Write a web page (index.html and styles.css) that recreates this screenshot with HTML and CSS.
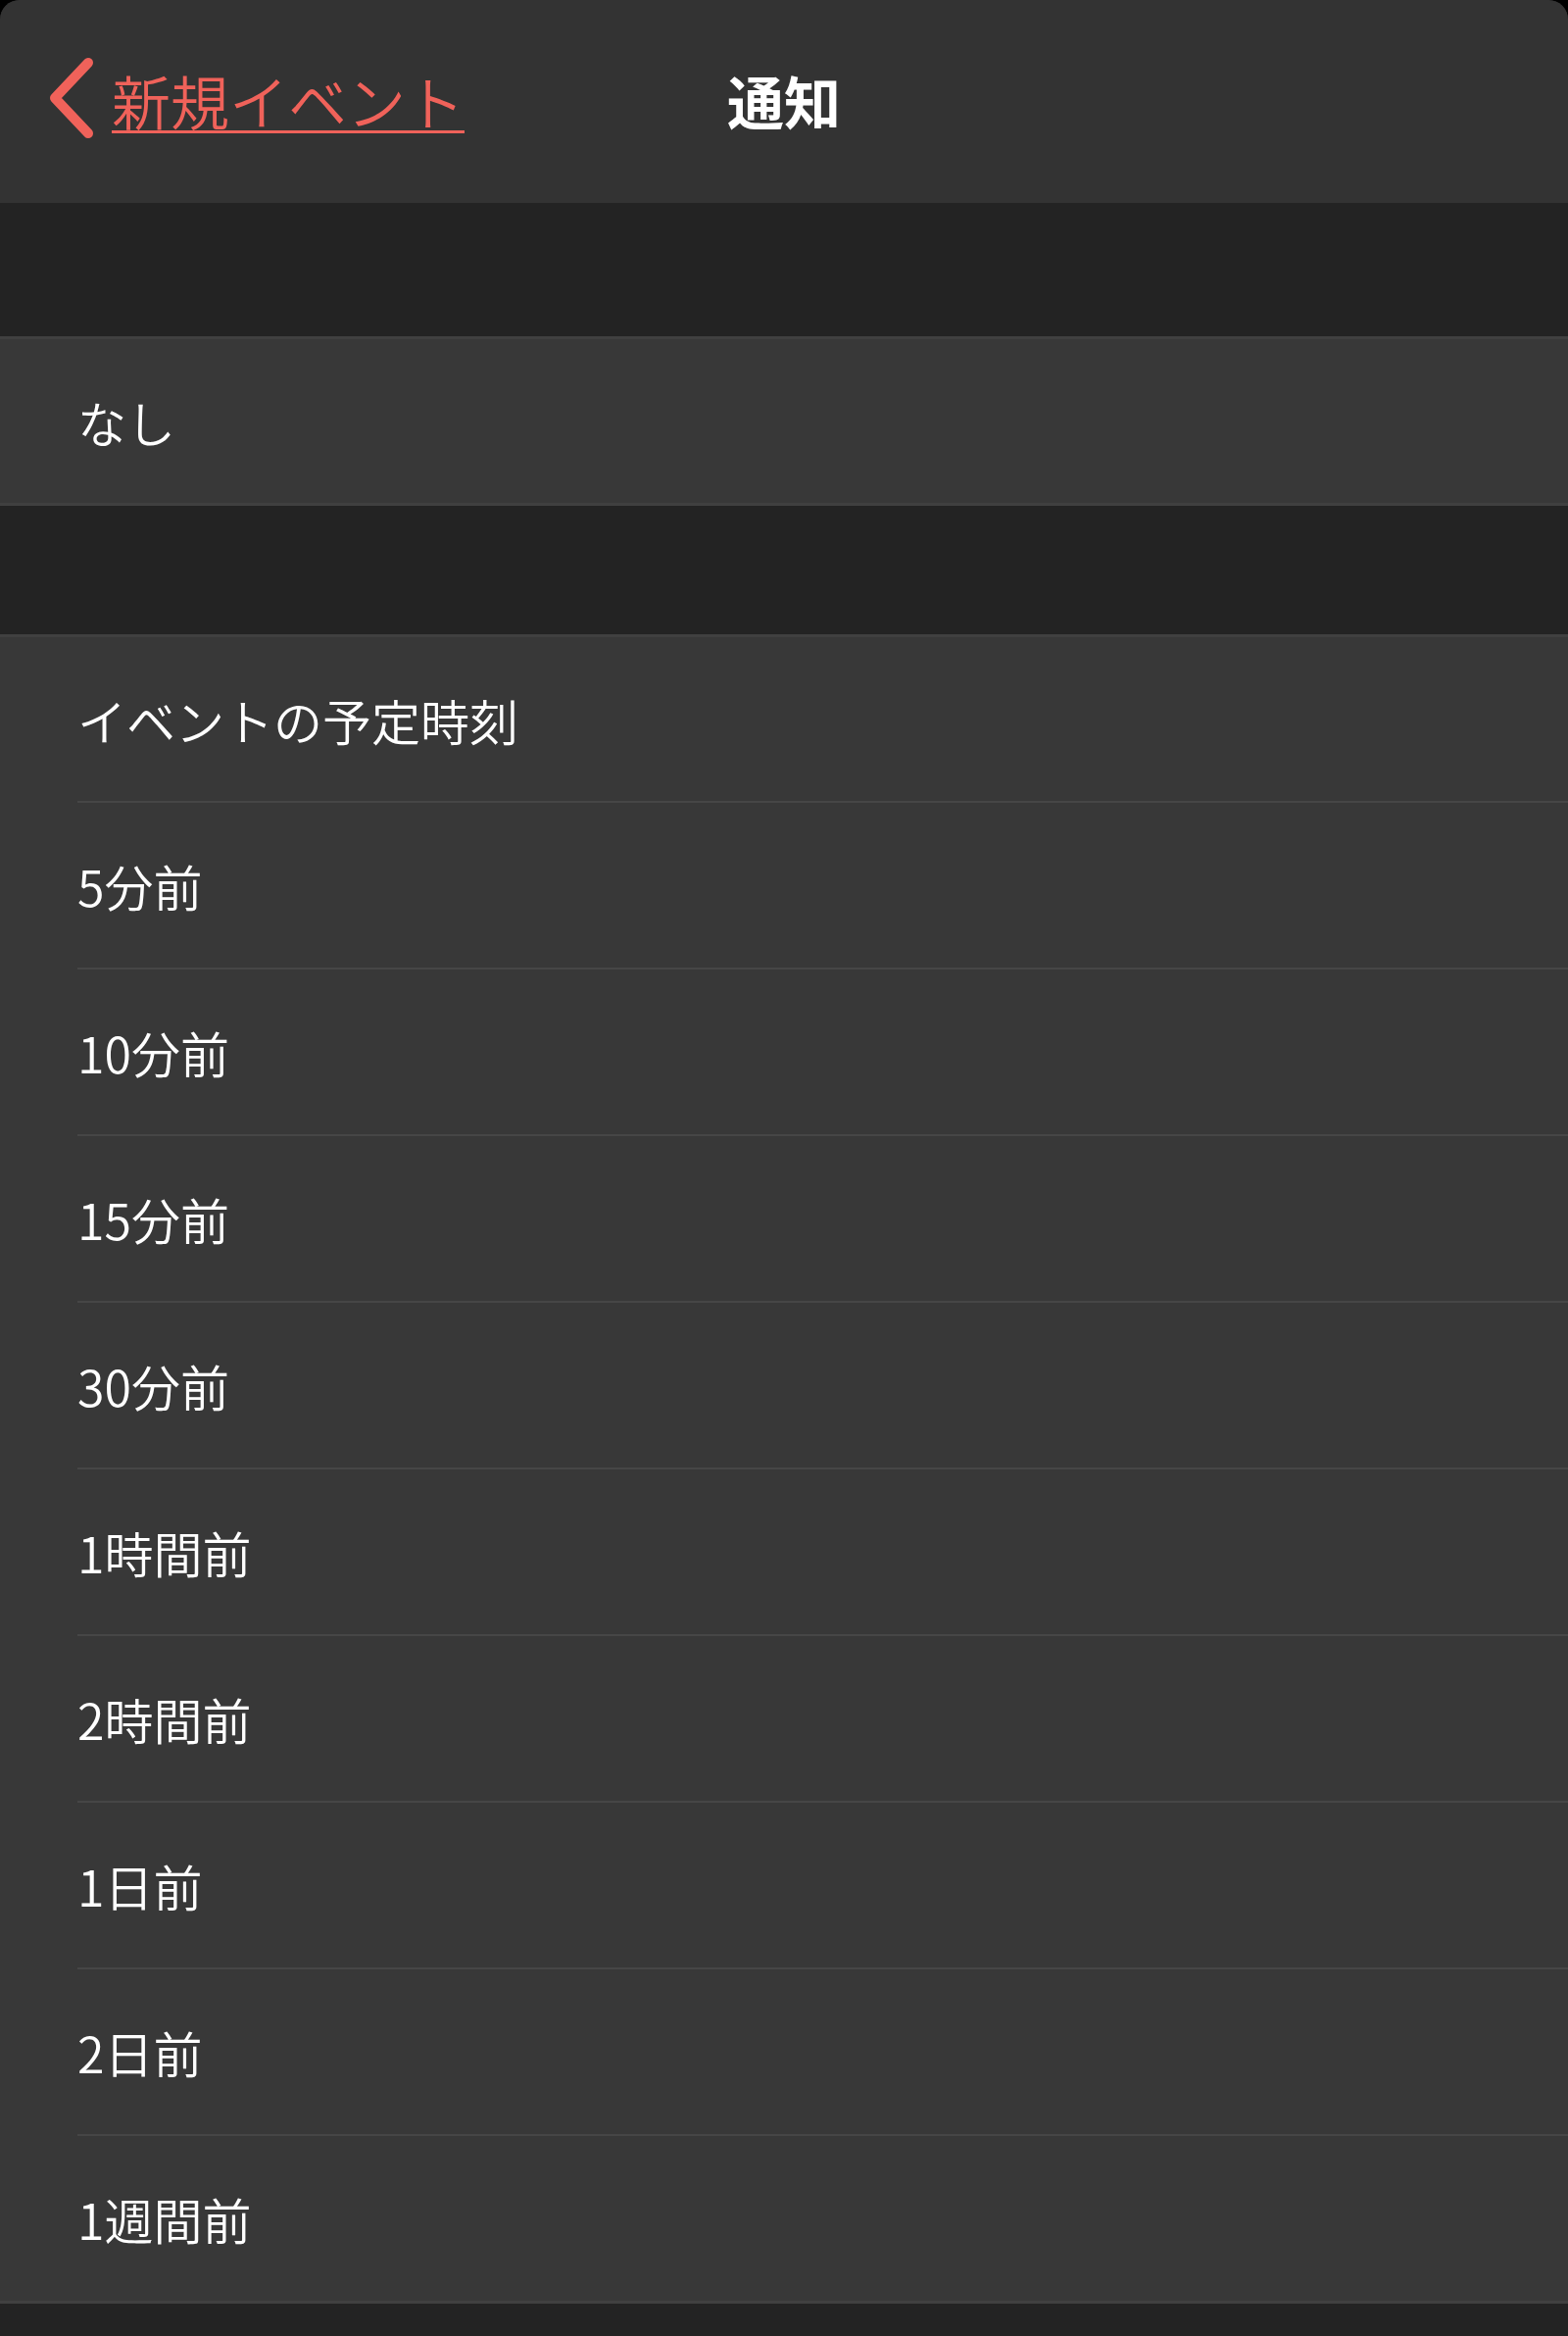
FILE: index.html
```html
<!DOCTYPE html>
<html lang="ja">
<head>
  <meta charset="UTF-8" />
  <meta name="viewport" content="width=device-width, initial-scale=1.0" />
  <title>通知</title>
  <link rel="stylesheet" href="styles.css">
</head>
<body>
  <div class="screen">
    <header class="navbar">
      <a class="back" href="#">
        <svg class="chevron" width="50" height="84" viewBox="0 0 50 84">
          <path d="M42 6 L8 42 L42 78" fill="none" stroke="#f0625a" stroke-width="10" stroke-linecap="round" stroke-linejoin="round"/>
        </svg>
        <span class="back-label">新規イベント</span>
      </a>
      <h1 class="title">通知</h1>
      <div></div>
    </header>

    <div class="spacer"></div>
    <ul class="group">
      <li class="row">なし</li>
    </ul>

    <div class="spacer short"></div>
    <ul class="group" id="options"></ul>
  </div>

  <script>
    const options = ['イベントの予定時刻', '5分前', '10分前', '15分前', '30分前', '1時間前', '2時間前', '1日前', '2日前', '1週間前'];
    const list = document.getElementById('options');
    options.forEach(label => {
      const li = document.createElement('li');
      li.className = 'row';
      li.textContent = label;
      list.appendChild(li);
    });
  </script>
</body>
</html>
```

FILE: styles.css
```css
body {
  margin: 0;
  background: #000;
  font-family: "Noto Sans CJK JP", "Noto Sans", sans-serif;
  color: #fff;
}

.screen {
  min-height: 2383px;
  background: #232323;
  border-radius: 20px 20px 0 0;
  overflow: hidden;
}

.navbar {
  height: 207px;
  box-sizing: border-box;
  padding-bottom: 4px;
  background: #333333;
  display: grid;
  grid-template-columns: 1fr auto 1fr;
  align-items: center;
}

.back {
  display: flex;
  align-items: center;
  gap: 16px;
  padding-left: 48px;
  color: #f0625a;
  text-decoration: none;
}

.chevron {
  margin-top: -4px;
}

.back-label {
  font-size: 60px;
  font-weight: 350;
  line-height: 1;
  text-decoration: underline;
  text-decoration-thickness: 3px;
  text-underline-offset: 5px;
}

.title {
  margin: 0;
  font-size: 58px;
  font-weight: bold;
  line-height: 1;
}

.spacer {
  height: 136px;
}

.spacer.short {
  height: 131px;
}

.group {
  list-style: none;
  margin: 0;
  padding: 0;
  background: #383838;
  border-top: 3px solid #404040;
  border-bottom: 3px solid #404040;
}

.row {
  height: 167px;
  display: flex;
  align-items: center;
  padding-left: 79px;
  font-size: 50px;
  font-weight: 350;
}

.row + .row {
  height: 168px;
  border-top: 2px solid #464646;
  margin-left: 79px;
  padding-left: 0;
}
```
